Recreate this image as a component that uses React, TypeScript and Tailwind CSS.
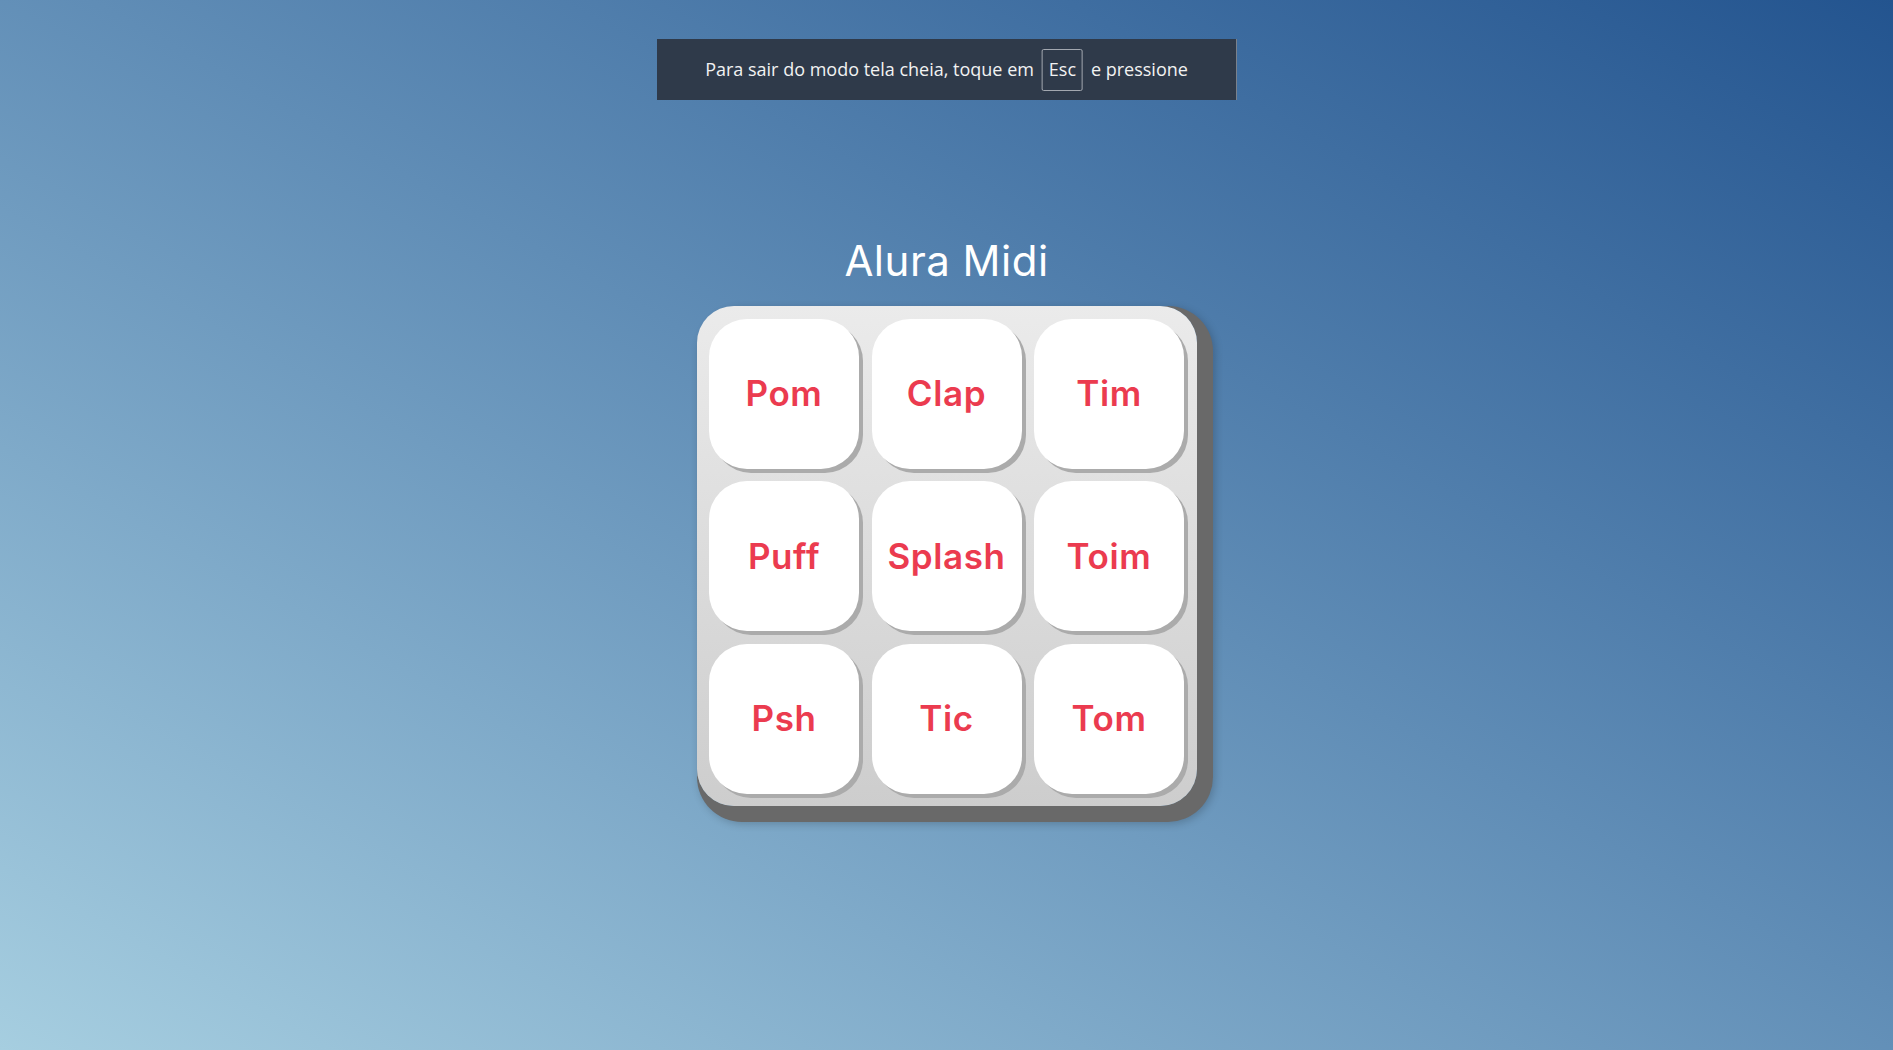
import React from 'react'

const pads = ['Pom', 'Clap', 'Tim', 'Puff', 'Splash', 'Toim', 'Psh', 'Tic', 'Tom']

function FullscreenNotice() {
  return (
    <div
      className="fixed top-[39px] left-1/2 -translate-x-1/2 h-[61px] px-[49px] flex items-center gap-[8px] bg-[#2f3a4a] text-[#f2f2f2] text-[18px] whitespace-nowrap"
      style={{ fontFamily: '"Open Sans", "Liberation Sans", sans-serif' }}
    >
      <span>Para sair do modo tela cheia, toque em</span>
      <span className="h-[42px] w-[41px] flex items-center justify-center border border-[#a3a8b0] rounded-[2px]">Esc</span>
      <span>e pressione</span>
    </div>
  )
}

function App() {
  return (
    <div
      className="min-h-screen w-full flex flex-col items-center pt-[236px] bg-linear-to-tr from-[#a6cee0] to-[#23548f]"
      style={{ fontFamily: 'Inter, "Noto Sans", sans-serif' }}
    >
      <FullscreenNotice />
      <h1 className="text-white text-[42px] leading-[50px] font-normal tracking-[0.5px] mb-5">Alura Midi</h1>
      <section className="w-[500px] h-[500px] p-[12.5px] grid grid-cols-3 grid-rows-3 gap-[12.5px] rounded-[37px] bg-linear-to-b from-[#ebebeb] to-[#cdcdcd] shadow-[8px_8px_0_8px_#696969,10px_10px_8px_8px_rgba(0,0,0,0.2)]">
        {pads.map((name) => (
          <button
            key={name}
            className="w-[150px] h-[150px] rounded-[38px] bg-white shadow-[4px_4px_0_#ababab] text-[35px] font-semibold tracking-[0.6px] text-[#eb3b4f] flex items-center justify-center"
          >
            {name}
          </button>
        ))}
      </section>
    </div>
  )
}

export default App
